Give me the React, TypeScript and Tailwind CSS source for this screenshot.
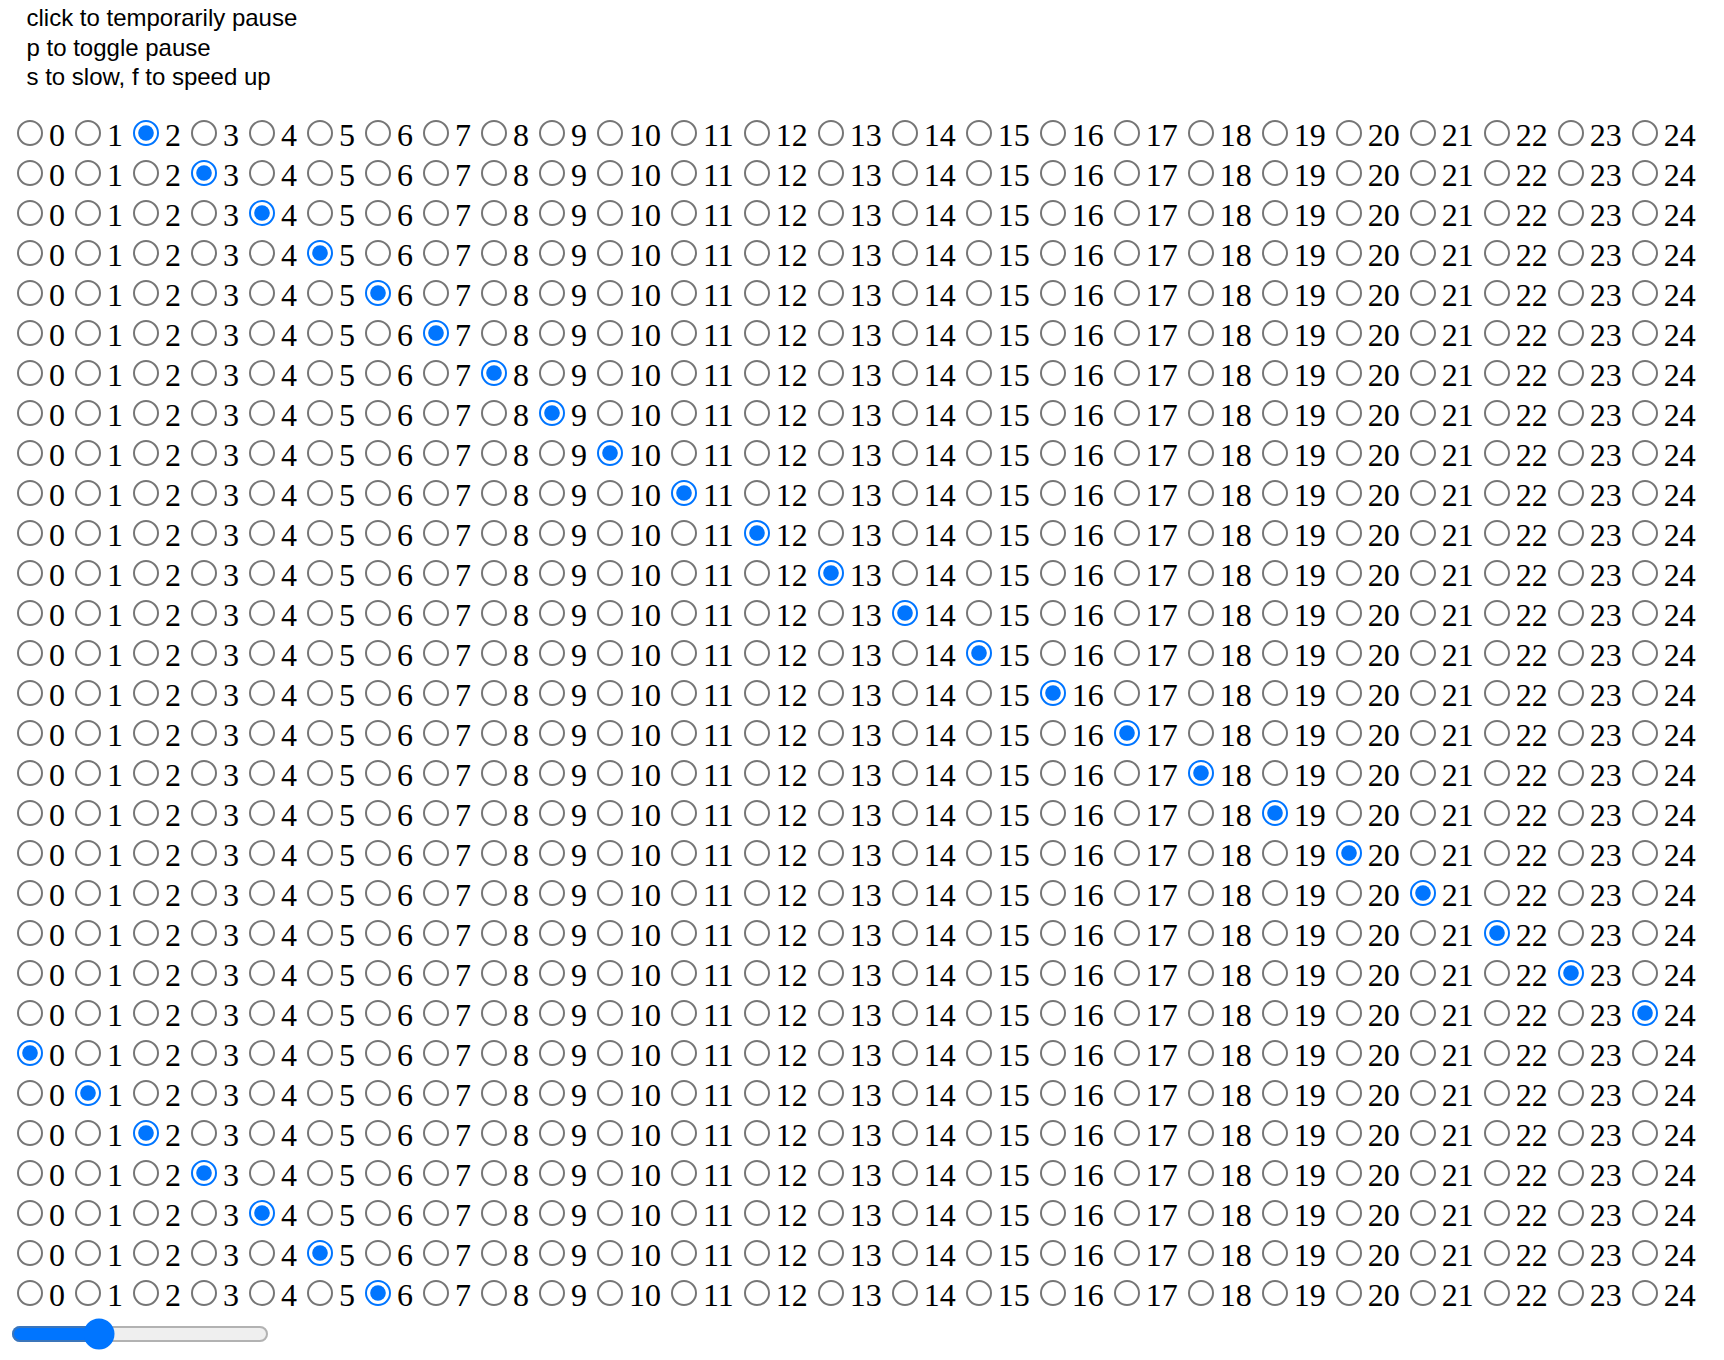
import React from "react";

export default function App() {
  const rows = Array.from({ length: 30 }, (_, i) => i);
  const cols = Array.from({ length: 25 }, (_, j) => j);
  return (
    <div className="min-h-screen bg-white text-black">
      <div className="pl-[26.5px] pt-[3px] font-['Liberation_Sans',Arial,sans-serif] text-[24px] leading-[29.5px] text-black">
        <div>click to temporarily pause</div>
        <div>p to toggle pause</div>
        <div>s to slow, f to speed up</div>
      </div>
      <div className="pl-[7px] pt-[22px]">
        <div className="[zoom:2] font-['Liberation_Serif','Times_New_Roman',serif] text-[16px] leading-[normal] whitespace-nowrap">
          {rows.map((i) => (
            <div key={i}>
              {cols.map((j) => (
                <React.Fragment key={j}>
                  <input
                    type="radio"
                    name={"row" + i}
                    defaultChecked={j === (i + 2) % 25}
                    className="mt-[3px] mr-[3px] ml-[5px]"
                  />
                  {j}
                </React.Fragment>
              ))}
            </div>
          ))}
          <div>
            <input type="range" min={0} max={100} defaultValue={32} className="m-[2px]" />
          </div>
        </div>
      </div>
    </div>
  );
}
